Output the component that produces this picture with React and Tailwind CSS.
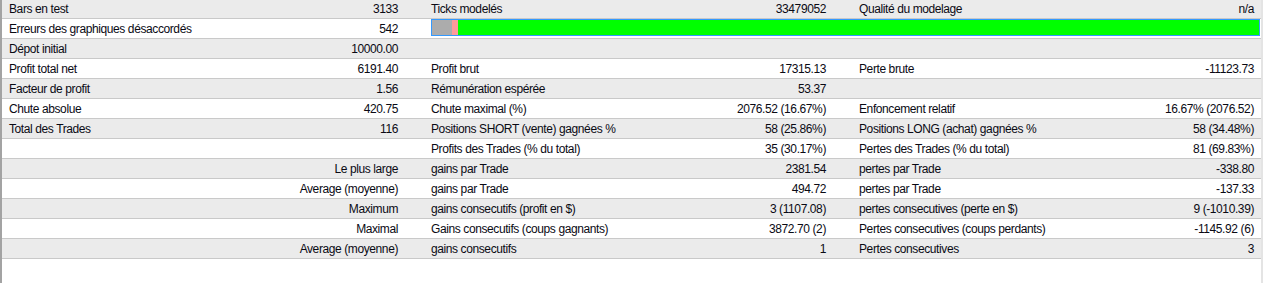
import React from 'react';

// rows: [label1, value1, label2, value2, label3, value3, alignRight]
const ROWS = [
  ['Bars en test', '3133', 'Ticks modelés', '33479052', 'Qualité du modelage', 'n/a'],
  ['Erreurs des graphiques désaccordés', '542', null, null, null, null],
  ['Dépot initial', '10000.00', '', '', '', ''],
  ['Profit total net', '6191.40', 'Profit brut', '17315.13', 'Perte brute', '-11123.73'],
  ['Facteur de profit', '1.56', 'Rémunération espérée', '53.37', '', ''],
  ['Chute absolue', '420.75', 'Chute maximal (%)', '2076.52 (16.67%)', 'Enfoncement relatif', '16.67% (2076.52)'],
  ['Total des Trades', '116', 'Positions SHORT (vente) gagnées %', '58 (25.86%)', 'Positions LONG (achat) gagnées %', '58 (34.48%)'],
  ['', '', 'Profits des Trades (% du total)', '35 (30.17%)', 'Pertes des Trades (% du total)', '81 (69.83%)'],
  ['Le plus large', '', 'gains par Trade', '2381.54', 'pertes par Trade', '-338.80', true],
  ['Average (moyenne)', '', 'gains par Trade', '494.72', 'pertes par Trade', '-137.33', true],
  ['Maximum', '', 'gains consecutifs (profit en $)', '3 (1107.08)', 'pertes consecutives (perte en $)', '9 (-1010.39)', true],
  ['Maximal', '', 'Gains consecutifs (coups gagnants)', '3872.70 (2)', 'Pertes consecutives (coups perdants)', '-1145.92 (6)', true],
  ['Average (moyenne)', '', 'gains consecutifs', '1', 'Pertes consecutives', '3', true],
];

function Cell({ label, value, first, right }) {
  return (
    <div className={`flex items-center justify-between pr-1 ${first ? 'w-[400px] pl-[7px]' : 'w-[428px] pl-[29px]'}`}>
      {right ? (
        <span className="ml-auto">{label}</span>
      ) : (
        <>
          <span>{label}</span>
          <span>{value}</span>
        </>
      )}
    </div>
  );
}

function ModelBar() {
  return (
    <div className="flex flex-1 items-start pl-[29px] pr-[1px]">
      <div className="flex h-[17px] w-full border border-[#3399ff]">
        <div className="w-[20px] bg-[#acacac]" />
        <div className="w-[6px] bg-[#ff9b9b]" />
        <div className="flex-1 bg-[#00ff00]" />
      </div>
    </div>
  );
}

export default function App() {
  return (
    <div
      className="flex h-[283px] w-[1263px] overflow-hidden border-l-2 border-r-2 border-l-[#a3a3a3] border-r-[#e4e4e4] bg-white text-[12px] tracking-[-0.4px] text-[#0a0a14]"
      style={{ fontFamily: '"Liberation Sans", Arial, sans-serif' }}
    >
      <div className="-mt-px flex w-full flex-col">
        {ROWS.map((r, i) => (
          <div
            key={i}
            className={`flex h-5 shrink-0 border-b border-[#c9c9c9] ${i % 2 === 0 ? 'bg-[#ebebeb]' : 'bg-white'}`}
          >
            <Cell label={r[0]} value={r[1]} first right={r[6]} />
            {r[2] === null ? (
              <ModelBar />
            ) : (
              <>
                <Cell label={r[2]} value={r[3]} />
                <Cell label={r[4]} value={r[5]} />
              </>
            )}
          </div>
        ))}
      </div>
    </div>
  );
}
